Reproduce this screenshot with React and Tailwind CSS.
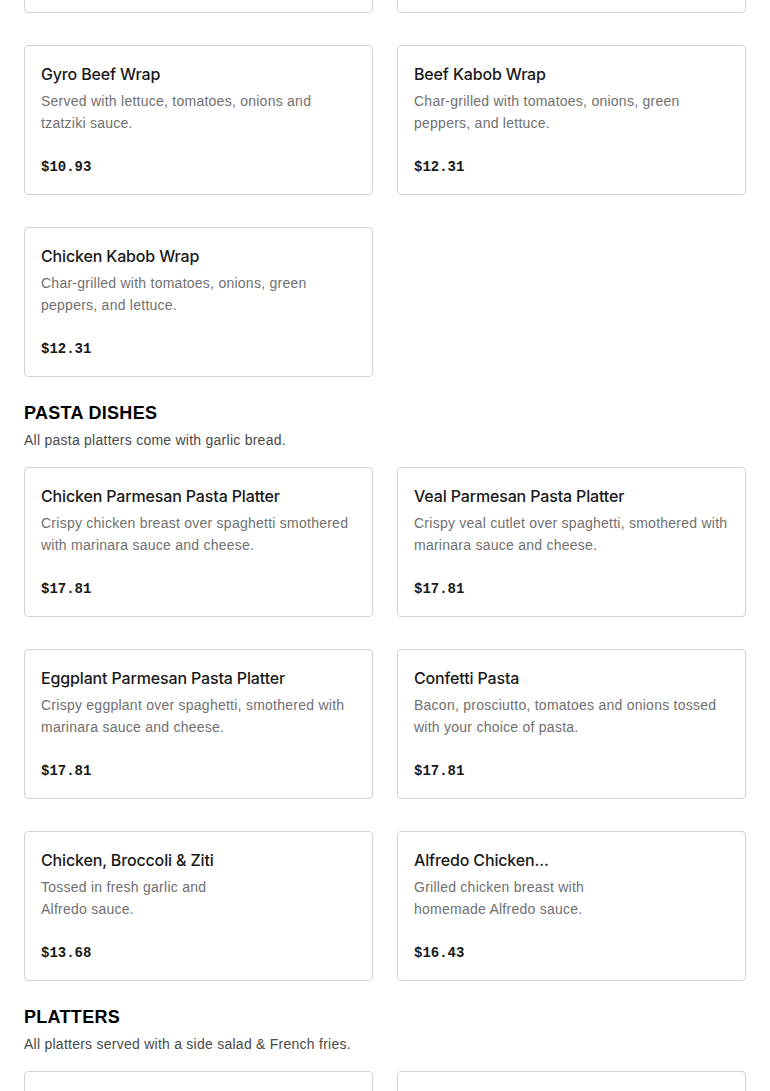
const SECTIONS = [
  {
    name: null,
    items: [
      { title: 'Lamb Gyro Wrap', desc: 'Served with lettuce, tomatoes, onions and tzatziki sauce.', price: '$10.93' },
      { title: 'Chicken Gyro Wrap', desc: 'Served with lettuce, tomatoes, onions and tzatziki sauce.', price: '$10.93' },
      { title: 'Gyro Beef Wrap', desc: 'Served with lettuce, tomatoes, onions and tzatziki sauce.', price: '$10.93' },
      { title: 'Beef Kabob Wrap', desc: 'Char-grilled with tomatoes, onions, green peppers, and lettuce.', price: '$12.31' },
      { title: 'Chicken Kabob Wrap', desc: 'Char-grilled with tomatoes, onions, green peppers, and lettuce.', price: '$12.31' },
    ],
  },
  {
    name: 'PASTA DISHES',
    note: 'All pasta platters come with garlic bread.',
    items: [
      { title: 'Chicken Parmesan Pasta Platter', desc: 'Crispy chicken breast over spaghetti smothered with marinara sauce and cheese.', price: '$17.81' },
      { title: 'Veal Parmesan Pasta Platter', desc: 'Crispy veal cutlet over spaghetti, smothered with marinara sauce and cheese.', price: '$17.81' },
      { title: 'Eggplant Parmesan Pasta Platter', desc: 'Crispy eggplant over spaghetti, smothered with marinara sauce and cheese.', price: '$17.81' },
      { title: 'Confetti Pasta', desc: 'Bacon, prosciutto, tomatoes and onions tossed with your choice of pasta.', price: '$17.81' },
      { title: 'Chicken, Broccoli & Ziti', desc: ['Tossed in fresh garlic and', 'Alfredo sauce.'], price: '$13.68' },
      { title: 'Alfredo Chicken...', desc: ['Grilled chicken breast with', 'homemade Alfredo sauce.'], price: '$16.43' },
    ],
  },
  {
    name: 'PLATTERS',
    note: 'All platters served with a side salad & French fries.',
    items: [
      { title: 'Chicken Kabob Platter', desc: 'Char-grilled chicken kabob served with rice.', price: '$18.50' },
      { title: 'Gyro Platter', desc: 'Sliced gyro meat served with tzatziki sauce.', price: '$17.81' },
    ],
  },
]

function ItemCard({ item }) {
  return (
    <div className="border border-[#d3d3d3] rounded-[4px] bg-white px-4 pt-4 pb-4 h-[150px]">
      <h3 className="text-[16px] leading-6 text-[#191919] truncate font-['Inter',sans-serif] font-medium tracking-[-0.15px]">
        {item.title}
      </h3>
      <p className="mt-1 text-[14px] leading-[22px] text-[#707070] h-[44px] tracking-[0.25px] font-['Liberation_Sans',Arial,sans-serif]">
        {Array.isArray(item.desc)
          ? item.desc.map((l, i) => (
              <span key={i}>
                {l}
                {i < item.desc.length - 1 && <br />}
              </span>
            ))
          : item.desc}
      </p>
      <p className="mt-[22px] text-[14px] leading-[22px] font-bold text-[#191919] font-['Liberation_Mono',monospace]">
        {item.price}
      </p>
    </div>
  )
}

export default function App() {
  return (
    <div className="bg-white min-h-screen overflow-hidden">
      <div className="px-6 mt-[-137px]">
        {SECTIONS.map((s, si) => (
          <section key={si} className={si > 0 ? 'mt-6' : ''}>
            {s.name && (
              <div className="mb-4">
                <h2 className="text-[18px] leading-6 font-bold text-black tracking-[0.3px] font-['Liberation_Sans',Arial,sans-serif]">
                  {s.name}
                </h2>
                <p className="mt-1 text-[14px] leading-[22px] text-[#494949] tracking-[0.25px] font-['Liberation_Sans',Arial,sans-serif]">
                  {s.note}
                </p>
              </div>
            )}
            <div className="grid grid-cols-2 gap-x-6 gap-y-8">
              {s.items.map((item, i) => (
                <ItemCard key={i} item={item} />
              ))}
            </div>
          </section>
        ))}
      </div>
    </div>
  )
}
